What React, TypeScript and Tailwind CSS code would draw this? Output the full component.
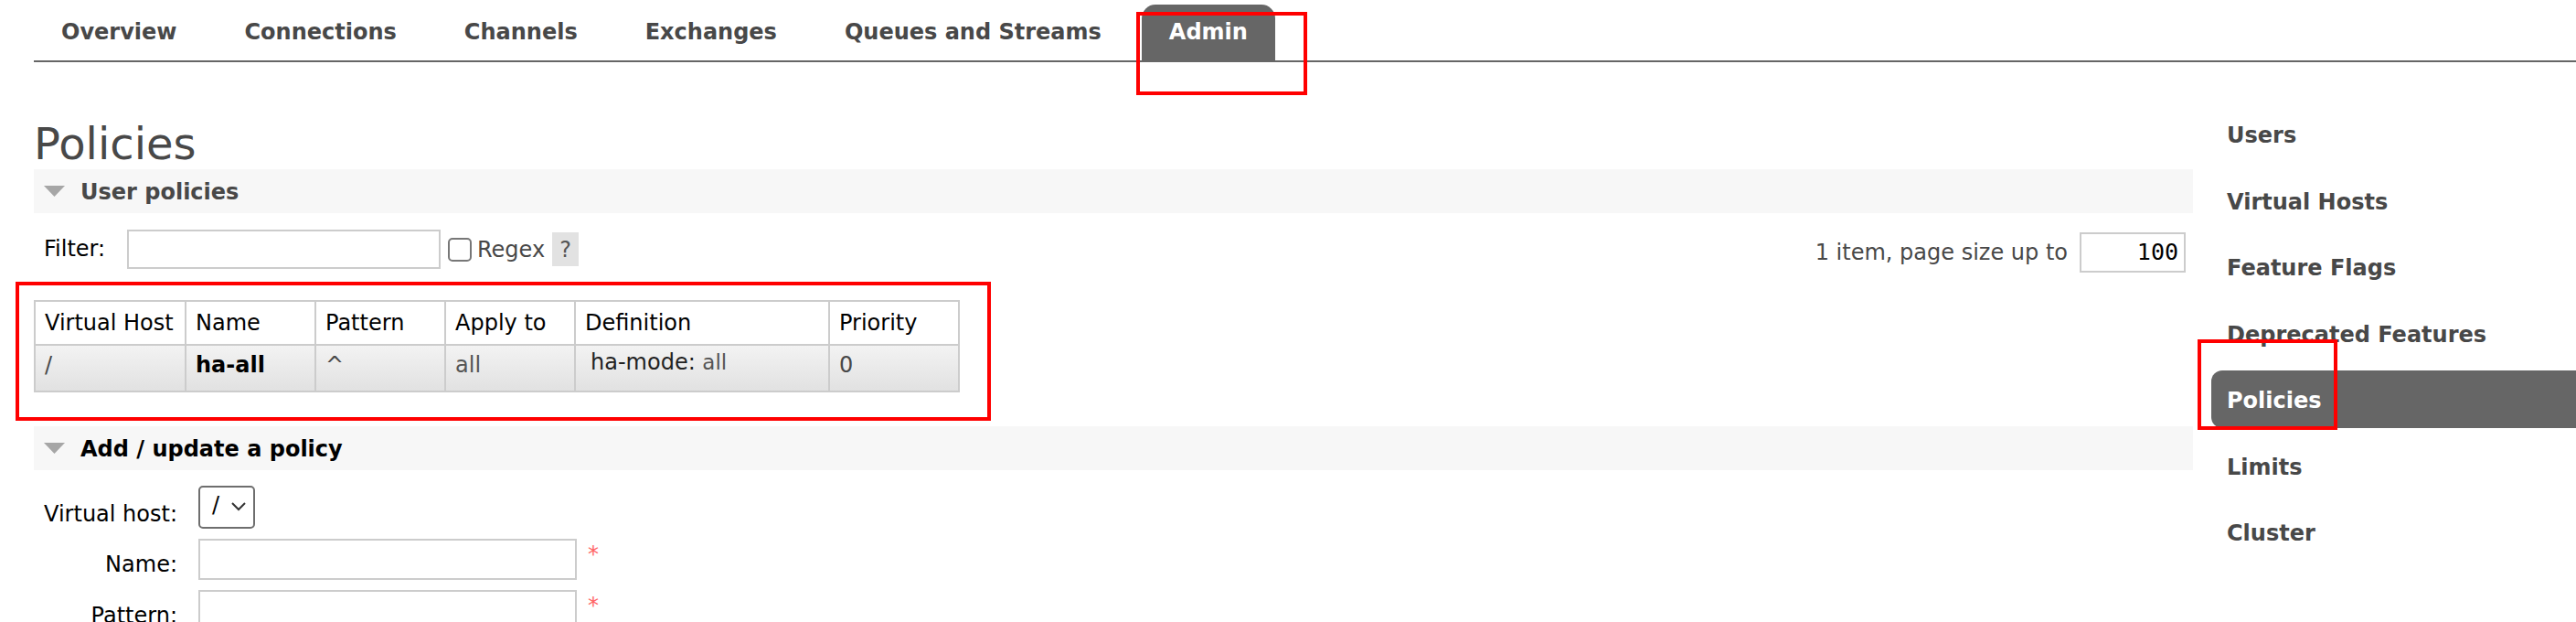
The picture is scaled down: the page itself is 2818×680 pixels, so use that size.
import React from "react";

const tabs = ["Overview", "Connections", "Channels", "Exchanges", "Queues and Streams"];
const side = ["Users", "Virtual Hosts", "Feature Flags", "Deprecated Features", "Policies", "Limits", "Cluster"];

function Tri() {
  return (
    <svg width="23" height="12" viewBox="0 0 23 12" className="shrink-0">
      <polygon points="0,0 23,0 11.5,12" fill="#a6a6a6" />
    </svg>
  );
}

function SectionHeader({ title, dark }: { title: string; dark?: boolean }) {
  return (
    <div className="h-[48px] bg-[#f7f7f7] flex items-center pl-[11px]">
      <Tri />
      <span className={`ml-[17px] text-[24px] font-bold leading-[48px] pt-[2px] ${dark ? "text-black" : "text-[#484848]"}`}>{title}</span>
    </div>
  );
}

export default function App() {
  return (
    <div className="relative w-[2818px] h-[680px] overflow-hidden bg-white font-['DejaVu_Sans',Verdana,sans-serif] text-[24px]">
      {/* top nav */}
      <nav className="ml-[37px] h-[68px] border-b-2 border-[#666] flex items-end gap-[14px]">
        {tabs.map((t) => (
          <div key={t} className="h-[61px] px-[30px] leading-[61px] font-bold text-[#484848] whitespace-nowrap">
            {t}
          </div>
        ))}
        <div className="h-[61px] px-[30px] leading-[61px] font-bold text-white bg-[#666] rounded-t-[15px]">Admin</div>
      </nav>

      <div className="flex">
        <main className="ml-[37px] w-[2362px] shrink-0">
          <h1 className="mt-[62px] text-[48px] leading-[55px] font-normal text-[#484848]">Policies</h1>
          <SectionHeader title="User policies" />

          <div className="mt-[18px] flex items-start h-[47px]">
            <div className="flex items-center pl-[11px]">
              <span className="w-[91px] text-black leading-[43px]">Filter:</span>
              <div className="w-[343px] h-[43px] border-2 border-[#ccc] bg-white" />
              <div className="ml-[8px] w-[26px] h-[26px] rounded-[5px] border-2 border-[#777] bg-white" />
              <span className="ml-[6px] text-[#484848]">Regex</span>
              <span className="ml-[8px] w-[29px] h-[37px] bg-[#e2e2e2] text-[#555] flex items-center justify-center">?</span>
            </div>
            <div className="ml-auto mt-[3px] pr-[8px] flex items-center">
              <span className="text-[#484848]">1 item, page size up to</span>
              <div className="ml-[13px] w-[116px] h-[44px] border-2 border-[#ccc] flex items-center justify-end pr-[6px] font-['DejaVu_Sans_Mono',monospace] text-[25px] text-black">
                100
              </div>
            </div>
          </div>

          <table className="mt-[30px] table-fixed border-collapse w-[1011px]">
            <colgroup>
              <col className="w-[165px]" />
              <col className="w-[142px]" />
              <col className="w-[142px]" />
              <col className="w-[142px]" />
              <col className="w-[278px]" />
              <col className="w-[142px]" />
            </colgroup>
            <thead>
              <tr className="h-[48px] bg-white">
                {["Virtual Host", "Name", "Pattern", "Apply to", "Definition", "Priority"].map((h) => (
                  <th key={h} className="border-2 border-[#ccc] text-left font-normal text-black pl-[10px] leading-[28px] whitespace-nowrap overflow-hidden">
                    {h}
                  </th>
                ))}
              </tr>
            </thead>
            <tbody>
              <tr className="h-[51px] bg-gradient-to-b from-[#f3f3f3] to-[#e1e1e1] align-top">
                <td className="border-2 border-[#ccc] pl-[10px] pt-[7px] leading-[28px] text-[#484848]">/</td>
                <td className="border-2 border-[#ccc] pl-[10px] pt-[7px] leading-[28px] font-bold text-black">ha-all</td>
                <td className="border-2 border-[#ccc] pl-[10px] pt-[7px] leading-[28px] text-[#484848]">^</td>
                <td className="border-2 border-[#ccc] pl-[10px] pt-[7px] leading-[28px] text-[#555]">all</td>
                <td className="border-2 border-[#ccc] pl-[16px] pt-[4px] leading-[28px] text-[#222]">
                  ha-mode: <span className="text-[23px] text-[#555]">all</span>
                </td>
                <td className="border-2 border-[#ccc] pl-[10px] pt-[7px] leading-[28px] text-[#484848]">0</td>
              </tr>
            </tbody>
          </table>

          <div className="mt-[37px]">
            <SectionHeader title="Add / update a policy" dark />
          </div>

          <div className="mt-[17px] flex flex-col gap-[11px]">
            <div className="flex items-start h-[47px]">
              <span className="w-[157px] text-right pt-[17px] leading-[28px] text-black">Virtual host:</span>
              <div className="ml-[23px] w-[62px] h-[47px] rounded-[5px] border-2 border-[#6e6e6e] bg-white flex items-center pl-[13px]">
                <span className="text-black leading-[28px] -mt-[6px]">/</span>
                <svg width="16" height="10" viewBox="0 0 16 10" className="ml-[13px] -mt-[2px]">
                  <path d="M1 1 L8 8 L15 1" fill="none" stroke="#333" strokeWidth="2" />
                </svg>
              </div>
            </div>
            <div className="flex items-start h-[45px]">
              <span className="w-[157px] text-right pt-[14px] leading-[28px] text-black">Name:</span>
              <div className="ml-[23px] w-[414px] h-[45px] border-2 border-[#ccc] bg-white" />
              <span className="ml-[12px] text-[#f66] leading-[28px] pt-[3px]">*</span>
            </div>
            <div className="flex items-start h-[45px]">
              <span className="w-[157px] text-right pt-[14px] leading-[28px] text-black">Pattern:</span>
              <div className="ml-[23px] w-[414px] h-[45px] border-2 border-[#ccc] bg-white" />
              <span className="ml-[12px] text-[#f66] leading-[28px] pt-[3px]">*</span>
            </div>
          </div>
        </main>

        <aside className="flex-1 pl-[20px] pt-[47px]">
          <ul className="flex flex-col gap-[9.5px]">
            {side.map((s) => (
              <li
                key={s}
                className={`h-[63px] pl-[17px] pt-[4px] leading-[59px] font-bold whitespace-nowrap ${
                  s === "Policies" ? "bg-[#666] text-white rounded-l-[12px]" : "text-[#484848]"
                }`}
              >
                {s}
              </li>
            ))}
          </ul>
        </aside>
      </div>

      {/* red annotation boxes */}
      <div className="absolute left-[1243px] top-[13px] w-[187px] h-[91px] border-4 border-[#ff0000]" />
      <div className="absolute left-[17px] top-[308px] w-[1067px] h-[152px] border-4 border-[#ff0000]" />
      <div className="absolute left-[2404px] top-[371px] w-[153px] h-[99px] border-4 border-[#ff0000]" />
    </div>
  );
}
